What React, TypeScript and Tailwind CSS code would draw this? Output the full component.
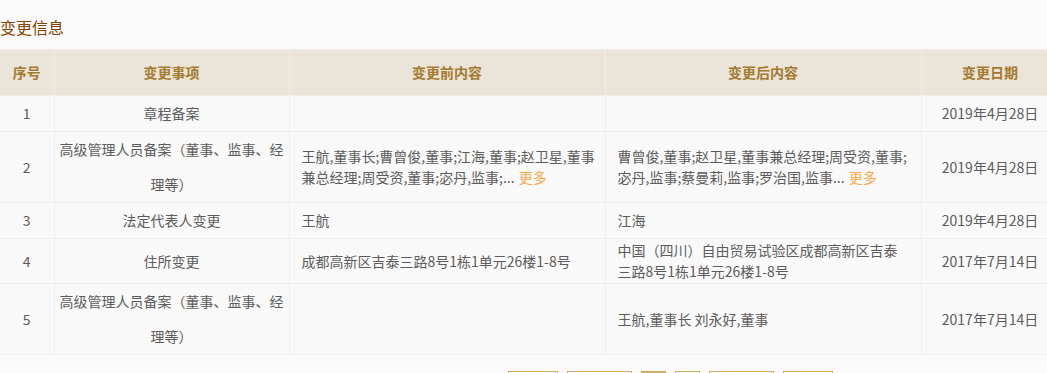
const rows = [
  {
    no: "1",
    item: ["章程备案"],
    before: [],
    after: [],
    date: "2019年4月28日",
  },
  {
    no: "2",
    item: ["高级管理人员备案（董事、监事、经", "理等）"],
    before: ["王航,董事长;曹曾俊,董事;江海,董事;赵卫星,董事", "兼总经理;周受资,董事;宓丹,监事;..."],
    beforeMore: true,
    after: ["曹曾俊,董事;赵卫星,董事兼总经理;周受资,董事;", "宓丹,监事;蔡曼莉,监事;罗治国,监事..."],
    afterMore: true,
    date: "2019年4月28日",
  },
  {
    no: "3",
    item: ["法定代表人变更"],
    before: ["王航"],
    after: ["江海"],
    date: "2019年4月28日",
  },
  {
    no: "4",
    item: ["住所变更"],
    before: ["成都高新区吉泰三路8号1栋1单元26楼1-8号"],
    after: ["中国（四川）自由贸易试验区成都高新区吉泰", "三路8号1栋1单元26楼1-8号"],
    date: "2017年7月14日",
  },
  {
    no: "5",
    item: ["高级管理人员备案（董事、监事、经", "理等）"],
    before: [],
    after: ["王航,董事长 刘永好,董事"],
    date: "2017年7月14日",
  },
];

function Lines({ lines, more }: { lines: string[]; more?: boolean }) {
  return (
    <>
      {lines.map((line, i) => (
        <div key={i} className="whitespace-nowrap">
          {line}
          {more && i === lines.length - 1 && (
            <span className="ml-1 text-[#f7a94a]">更多</span>
          )}
        </div>
      ))}
    </>
  );
}

export default function App() {
  return (
    <div
      className="w-full overflow-hidden bg-[#fafafa] min-h-[373px] text-[14px] text-[#5c5c5c]"
      style={{ fontFamily: '"Noto Sans CJK SC", "Noto Sans", sans-serif' }}
    >
      {/* Title */}
      <h3 className="pt-[15px] mb-[10px] text-[16px] leading-[24px] text-[#844200]">变更信息</h3>

      <table className="w-[1059px] table-fixed border-collapse">
        <colgroup>
          <col className="w-[54px]" />
          <col className="w-[235px]" />
          <col className="w-[316px]" />
          <col className="w-[316px]" />
          <col className="w-[138px]" />
        </colgroup>
        <thead>
          <tr className="h-[46px] bg-[#ebe4d8] text-[#a37a2e] font-bold">
            <th className="border border-l-0 border-[#f1eee8]">序号</th>
            <th className="border border-[#f1eee8]">变更事项</th>
            <th className="border border-[#f1eee8]">变更前内容</th>
            <th className="border border-[#f1eee8]">变更后内容</th>
            <th className="border border-[#f1eee8]">变更日期</th>
          </tr>
        </thead>
        <tbody>
          {rows.map((r) => (
            <tr key={r.no} className="bg-[#f9f9f9]">
              <td className="border border-l-0 border-[#ededed] text-center">{r.no}</td>
              <td className="border border-[#ededed] text-center leading-[35px]">
                {r.item.map((l, i) => (
                  <div key={i}>{l}</div>
                ))}
              </td>
              <td className="border border-[#ededed] px-3 py-px leading-[21px]">
                <Lines lines={r.before} more={r.beforeMore} />
              </td>
              <td className="border border-[#ededed] px-3 py-px leading-[21px]">
                <Lines lines={r.after} more={r.afterMore} />
              </td>
              <td className="border border-[#ededed] text-center">{r.date}</td>
            </tr>
          ))}
        </tbody>
      </table>

      {/* Pagination */}
      <div className="mt-[16px] ml-[508px] flex gap-[9px] text-[12px]">
        <span className="h-[28px] w-[50px] shrink-0 border border-[#d5ad62] text-center leading-[26px]">首页</span>
        <span className="h-[28px] w-[65px] shrink-0 border border-[#d5ad62] text-center leading-[26px]">上一页</span>
        <span className="h-[28px] w-[25px] shrink-0 border border-[#d5ad62] bg-[#d5ad62] text-white text-center leading-[26px]">1</span>
        <span className="h-[28px] w-[25px] shrink-0 border border-[#d5ad62] text-center leading-[26px]">2</span>
        <span className="h-[28px] w-[65px] shrink-0 border border-[#d5ad62] text-center leading-[26px]">下一页</span>
        <span className="h-[28px] w-[50px] shrink-0 border border-[#d5ad62] text-center leading-[26px]">末页</span>
      </div>
    </div>
  );
}
